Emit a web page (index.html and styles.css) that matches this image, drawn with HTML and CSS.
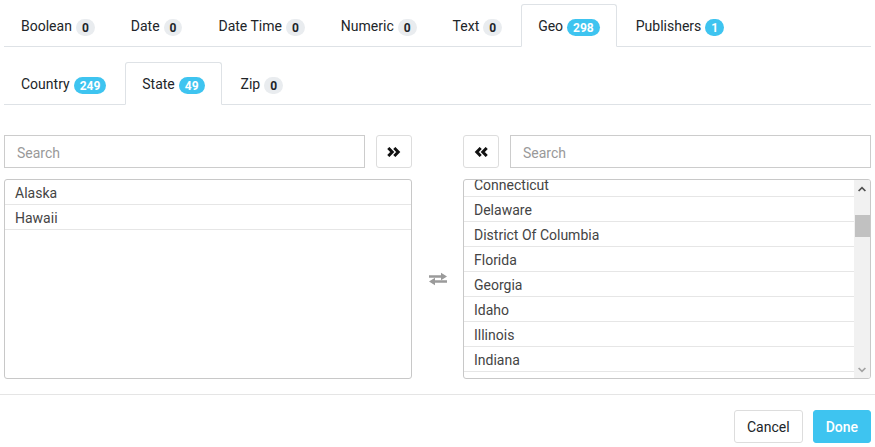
FILE: index.html
```html
<!DOCTYPE html>
<html>
<head>
<meta charset="utf-8">
<link rel="stylesheet" href="styles.css">
</head>
<body>
<div class="dialog">
  <div class="content">
    <ul class="tabs">
      <li class="tab">Boolean<span class="badge">0</span></li>
      <li class="tab">Date<span class="badge">0</span></li>
      <li class="tab">Date Time<span class="badge">0</span></li>
      <li class="tab">Numeric<span class="badge">0</span></li>
      <li class="tab">Text<span class="badge">0</span></li>
      <li class="tab active">Geo<span class="badge blue">298</span></li>
      <li class="tab">Publishers<span class="badge blue">1</span></li>
    </ul>
    <ul class="tabs sub">
      <li class="tab">Country<span class="badge blue">249</span></li>
      <li class="tab active">State<span class="badge blue">49</span></li>
      <li class="tab">Zip<span class="badge">0</span></li>
    </ul>
    <div class="dual">
      <div class="side">
        <div class="toolbar">
          <input class="search" type="text" placeholder="Search">
          <button class="icon-btn" type="button">
            <svg width="14" height="10" viewBox="0 0 14 10"><path d="M1.3 1 L5.2 5 L1.3 9 M7.3 1 L11.2 5 L7.3 9" fill="none" stroke="#111" stroke-width="3"/></svg>
          </button>
        </div>
        <div class="list">
          <div class="viewport">
            <div class="item">Alaska</div>
            <div class="item">Hawaii</div>
          </div>
        </div>
      </div>
      <div class="middle">
        <svg width="20" height="14" viewBox="0 0 20 14"><path d="M1 3.2 H13 V0.8 L19 4.5 L13 8.2 V5.8 H1 Z" fill="#9a9a9a"/><path d="M19 8.2 H7 V5.8 L1 9.5 L7 13.2 V10.8 H19 Z" fill="#9a9a9a"/></svg>
      </div>
      <div class="side">
        <div class="toolbar">
          <button class="icon-btn" type="button">
            <svg width="14" height="10" viewBox="0 0 14 10"><path d="M6.7 1 L2.8 5 L6.7 9 M12.7 1 L8.8 5 L12.7 9" fill="none" stroke="#111" stroke-width="3"/></svg>
          </button>
          <input class="search" type="text" placeholder="Search">
        </div>
        <div class="list">
          <div class="viewport" id="rightList">
            <div class="item">Alabama</div>
            <div class="item">Arizona</div>
            <div class="item">Arkansas</div>
            <div class="item">California</div>
            <div class="item">Colorado</div>
            <div class="item">Connecticut</div>
            <div class="item">Delaware</div>
            <div class="item">District Of Columbia</div>
            <div class="item">Florida</div>
            <div class="item">Georgia</div>
            <div class="item">Idaho</div>
            <div class="item">Illinois</div>
            <div class="item">Indiana</div>
            <div class="item">Iowa</div>
            <div class="item">Kansas</div>
            <div class="item">Kentucky</div>
            <div class="item">Louisiana</div>
            <div class="item">Maine</div>
            <div class="item">Maryland</div>
            <div class="item">Massachusetts</div>
            <div class="item">Michigan</div>
            <div class="item">Minnesota</div>
            <div class="item">Mississippi</div>
            <div class="item">Missouri</div>
            <div class="item">Montana</div>
            <div class="item">Nebraska</div>
            <div class="item">Nevada</div>
            <div class="item">New Hampshire</div>
            <div class="item">New Jersey</div>
            <div class="item">New Mexico</div>
            <div class="item">New York</div>
            <div class="item">North Carolina</div>
            <div class="item">North Dakota</div>
            <div class="item">Ohio</div>
            <div class="item">Oklahoma</div>
            <div class="item">Oregon</div>
            <div class="item">Pennsylvania</div>
            <div class="item">Rhode Island</div>
            <div class="item">South Carolina</div>
            <div class="item">South Dakota</div>
            <div class="item">Tennessee</div>
            <div class="item">Texas</div>
            <div class="item">Utah</div>
            <div class="item">Vermont</div>
            <div class="item">Virginia</div>
            <div class="item">Washington</div>
            <div class="item">West Virginia</div>
            <div class="item">Wisconsin</div>
            <div class="item">Wyoming</div>
          </div>
          <div class="scrollbar">
            <div class="sb-btn">
              <svg width="8" height="6" viewBox="0 0 8 6"><path d="M0.6 5 L4 1.6 L7.4 5" fill="none" stroke="#505050" stroke-width="1.7"/></svg>
            </div>
            <div class="sb-track">
              <div class="sb-thumb" style="margin-top:18px;height:22px"></div>
            </div>
            <div class="sb-btn">
              <svg width="8" height="6" viewBox="0 0 8 6"><path d="M0.6 1 L4 4.4 L7.4 1" fill="none" stroke="#a3a3a3" stroke-width="1.7"/></svg>
            </div>
          </div>
        </div>
      </div>
    </div>
  </div>
  <div class="footer">
    <button class="btn" type="button">Cancel</button>
    <button class="btn primary" type="button">Done</button>
  </div>
</div>
<script src="script.js"></script>
</body>
</html>
```
FILE: styles.css
```css
html, body {
  margin: 0;
  padding: 0;
  background: #fff;
}
body {
  font-family: Roboto, "Liberation Sans", Arial, sans-serif;
  font-size: 14px;
  color: #212529;
}
.dialog {
  width: 875px;
}
.content {
  padding: 4px 4px 0 4px;
}
.tabs {
  list-style: none;
  margin: 0;
  padding: 0;
  display: flex;
  gap: 2px;
  border-bottom: 1px solid #dee2e6;
}
.tabs.sub {
  margin-top: 15px;
}
.tab {
  display: flex;
  align-items: center;
  padding: 11px 16px 10px;
  line-height: 20px;
  border: 1px solid transparent;
  border-top-left-radius: 3px;
  border-top-right-radius: 3px;
  margin-bottom: -1px;
  color: #212529;
}
.tab.active {
  border-color: #dee2e6 #dee2e6 #fff;
  background: #fff;
}
.badge {
  display: inline-block;
  margin-left: 4px;
  padding: 3px 6px 2px;
  font-size: 12px;
  font-weight: 700;
  line-height: 12px;
  border-radius: 10px;
  background: #e9ecef;
  color: #212529;
  position: relative;
  top: 1px;
}
.badge.blue {
  background: #3ec4f0;
  color: #fff;
}
.dual {
  display: flex;
  margin-top: 30px;
}
.side {
  width: 408px;
  display: flex;
  flex-direction: column;
  gap: 11px;
}
.middle {
  width: 51px;
  display: flex;
  align-items: center;
  justify-content: center;
  padding-top: 44px;
  box-sizing: border-box;
}
.toolbar {
  display: flex;
  gap: 11px;
  height: 33px;
}
.search {
  flex: 1;
  min-width: 0;
  height: 33px;
  box-sizing: border-box;
  border: 1px solid #ccc;
  border-radius: 0;
  padding: 3px 12px 0;
  font-family: inherit;
  font-size: 14px;
  color: #333;
  outline: none;
}
.search::placeholder {
  color: #999;
}
.icon-btn {
  width: 36px;
  height: 33px;
  box-sizing: border-box;
  border: 1px solid #ddd;
  border-radius: 3px;
  background: #fff;
  display: flex;
  align-items: center;
  justify-content: center;
  padding: 0;
}
.list {
  height: 200px;
  box-sizing: border-box;
  border: 1px solid #c8c8c8;
  border-radius: 3px;
  overflow: hidden;
  display: flex;
}
.viewport {
  flex: 1;
  min-width: 0;
  overflow: hidden;
}
.item {
  height: 24px;
  box-sizing: border-box;
  padding: 3px 10px 0;
  line-height: 21px;
  height: 25px;
  border-bottom: 1px solid #e6e6e6;
  color: #444;
  white-space: nowrap;
}
.scrollbar {
  width: 16px;
  background: #f1f1f1;
  display: flex;
  flex-direction: column;
}
.sb-btn {
  height: 17px;
  display: flex;
  align-items: center;
  justify-content: center;
}
.sb-track {
  flex: 1;
  display: flex;
  flex-direction: column;
  align-items: center;
}
.sb-thumb {
  width: 15px;
  background: #c1c1c1;
}
.footer {
  margin-top: 15px;
  border-top: 1px solid #e5e5e5;
  padding: 15px 4px 0 4px;
  display: flex;
  justify-content: flex-end;
  gap: 10px;
}
.btn {
  height: 33px;
  box-sizing: border-box;
  padding: 0 12px;
  border: 1px solid #ddd;
  border-radius: 3px;
  background: #fff;
  font-family: inherit;
  font-size: 14px;
  color: #212529;
}
.btn.primary {
  background: #3ec4f0;
  border-color: #3ec4f0;
  color: #fff;
  font-weight: 500;
}
```
FILE: script.js
```js
document.getElementById('rightList').scrollTop = 133;
```
